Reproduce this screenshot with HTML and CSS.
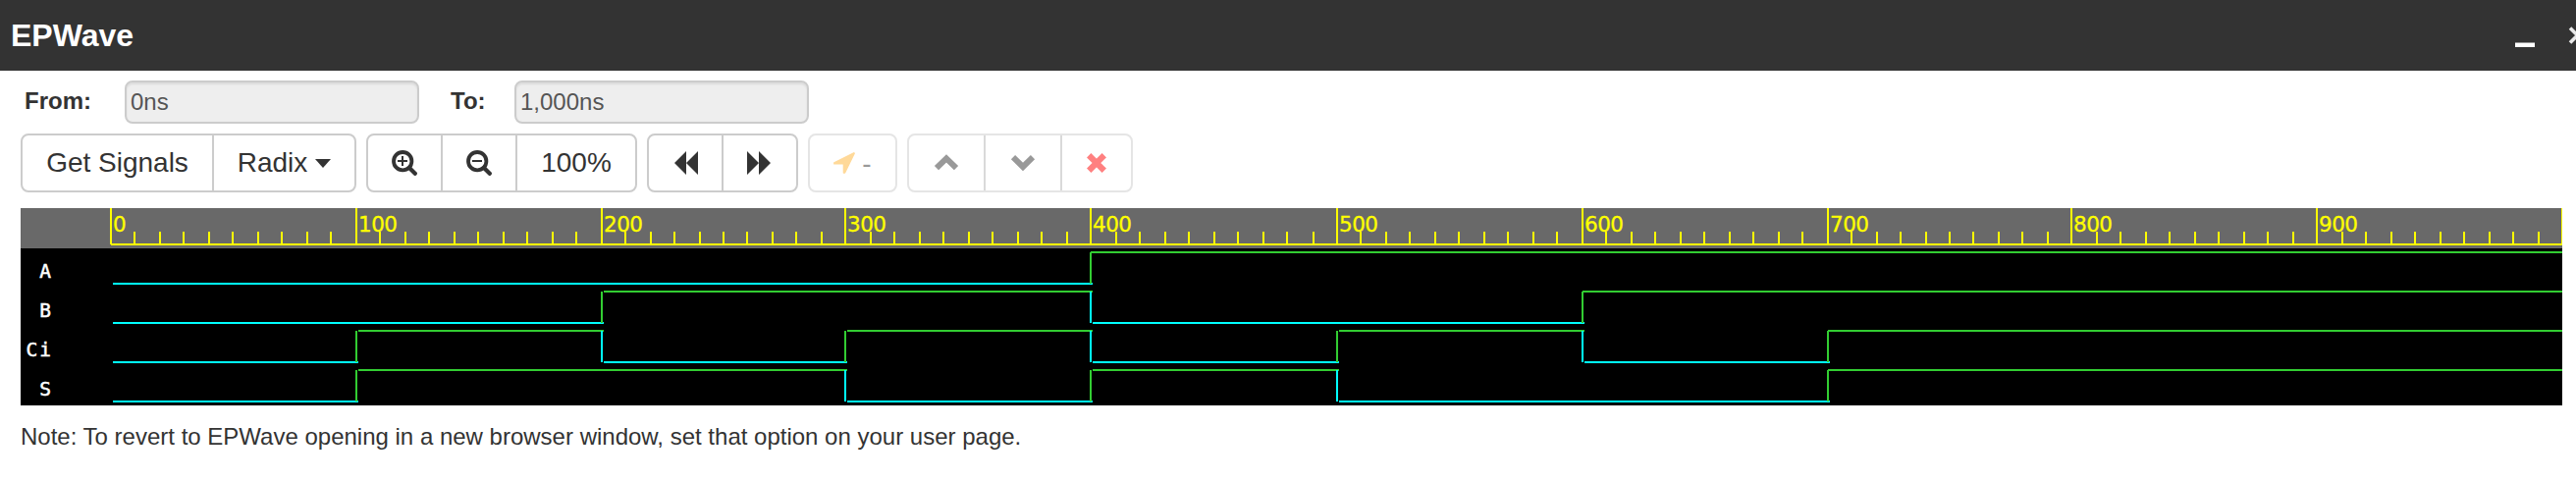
FILE: index.html
```html
<!DOCTYPE html>
<html lang="en">
<head>
<meta charset="utf-8">
<title>EPWave</title>
<link rel="stylesheet" href="styles.css">
</head>
<body>
<header class="titlebar">
  <h1 class="title">EPWave</h1>
  <svg class="window-controls" width="62" height="72" viewBox="0 0 62 72">
    <rect x="0" y="43.5" width="20" height="4.5" fill="#fff"/>
    <path d="M56 28.5L71 43.5M56 43.5L71 28.5" stroke="#e8e8e8" stroke-width="3.6"/>
  </svg>
</header>
<main class="content">
  <form class="range">
    <label class="range-label from" for="from">From:</label>
    <input class="range-input" id="from" value="0ns" disabled>
    <label class="range-label to" for="to">To:</label>
    <input class="range-input" id="to" value="1,000ns" disabled>
  </form>
  <div class="toolbar">
    <div class="group">
      <button class="btn signals">Get Signals</button>
      <button class="btn radix">Radix<svg class="caret" width="16" height="9" viewBox="0 0 16 9"><path d="M0 0H16L8 9Z" fill="#333"/></svg></button>
    </div>
    <div class="group">
      <button class="btn zoom-in" aria-label="Zoom in"><svg width="26" height="26" viewBox="0 0 26 26" fill="none" stroke="#333"><circle cx="11.2" cy="11.2" r="9.2" stroke-width="3.8"/><path d="M18 18L23.8 23.8" stroke-width="4.2" stroke-linecap="round"/><path d="M6 11H16M11 6V16" stroke-width="2"/></svg></button>
      <button class="btn zoom-out" aria-label="Zoom out"><svg width="26" height="26" viewBox="0 0 26 26" fill="none" stroke="#333"><circle cx="11.2" cy="11.2" r="9.2" stroke-width="3.8"/><path d="M18 18L23.8 23.8" stroke-width="4.2" stroke-linecap="round"/><path d="M6 11H16" stroke-width="2"/></svg></button>
      <button class="btn full">100%</button>
    </div>
    <div class="group">
      <button class="btn back" aria-label="Back"><svg width="28" height="24" viewBox="0 0 28 24"><path d="M3 12L15 0V24ZM15 12L27 0V24Z" fill="#333"/></svg></button>
      <button class="btn forward" aria-label="Forward"><svg width="28" height="24" viewBox="0 0 28 24"><path d="M1 0L13 12L1 24ZM13 0L25 12L13 24Z" fill="#333"/></svg></button>
    </div>
    <div class="group disabled">
      <button class="btn cursor" disabled><svg width="22" height="22" viewBox="0 0 22 22"><path d="M.8 10.8L20.8 .8L21.2 1.2L11.6 21L10.4 21V11.9H.8Z" fill="#ffd999" stroke="#ffd999" stroke-width="1.4" stroke-linejoin="round"/></svg><span class="dash">-</span></button>
    </div>
    <div class="group disabled">
      <button class="btn up" disabled aria-label="Move up"><svg width="26" height="18" viewBox="0 0 26 18"><path d="M3 14.2L13 4.4L23 14.2" fill="none" stroke="#999" stroke-width="6"/></svg></button>
      <button class="btn down" disabled aria-label="Move down"><svg width="26" height="18" viewBox="0 0 26 18"><path d="M3 3.2L13 13L23 3.2" fill="none" stroke="#999" stroke-width="6"/></svg></button>
      <button class="btn remove" disabled aria-label="Remove"><svg width="20" height="20" viewBox="0 0 20 20"><path d="M4.4 4.4L15.6 15.6M15.6 4.4L4.4 15.6" stroke="#ff8080" stroke-width="6.2" stroke-linecap="square" stroke-linejoin="round"/></svg></button>
    </div>
  </div>
  <svg class="wave" id="wave" width="2589" height="201" viewBox="0 0 2589 201"></svg>
  <p class="note">Note: To revert to EPWave opening in a new browser window, set that option on your user page.</p>
</main>
<script src="wave.js"></script>
</body>
</html>
```
FILE: styles.css
```css
* { box-sizing: border-box; }
body {
  margin: 0;
  height: 490px;
  overflow: hidden;
  background: #fff;
  color: #333;
  font-family: "Liberation Sans", Arial, sans-serif;
  font-size: 24px;
}
svg { display: block; flex: none; }
.titlebar {
  display: flex;
  justify-content: space-between;
  align-items: center;
  height: 72px;
  padding-left: 11px;
  background: #333;
}
.title { margin: 0; color: #fff; font-size: 32px; line-height: 36px; }
.content { padding: 10px 14px 0 21px; }
.range { display: flex; height: 44px; }
.range-label { font-weight: bold; line-height: 42px; }
.from { width: 106px; padding-left: 4px; }
.to { width: 97px; padding-left: 32px; }
.range-input {
  width: 300px;
  height: 44px;
  padding: 0 4px 1px;
  border: 2px solid #ccc;
  border-radius: 8px;
  background: #eee;
  box-shadow: inset 0 2px 2px rgba(0, 0, 0, .075);
  color: #555;
  font: inherit;
}
.toolbar { display: flex; gap: 10px; margin-top: 10px; }
.group { display: flex; height: 60px; border: 2px solid #ccc; border-radius: 8px; }
.btn {
  display: flex;
  justify-content: center;
  align-items: center;
  padding: 0;
  border: 0;
  background: none;
  color: #333;
  font: 28px "Liberation Sans", Arial, sans-serif;
}
.btn + .btn { border-left: 2px solid #ccc; }
.disabled { border-color: #e5e5e5; }
.disabled .btn { color: #999; }
.disabled .btn + .btn { border-color: #d9d9d9; }
.signals { width: 193px; }
.radix { width: 145px; gap: 8px; }
.zoom-in { width: 74px; }
.zoom-out { width: 76px; }
.full { width: 122px; }
.back { width: 74px; }
.forward { width: 76px; }
.cursor { width: 87px; gap: 7px; }
.dash { padding-top: 1px; }
.up { width: 76px; }
.down { width: 78px; }
.remove { width: 72px; }
.wave { margin-top: 16px; background: #000; }
.tick-label { fill: #ff0; stroke: #ff0; stroke-width: .3px; font: 21.5px "DejaVu Sans", sans-serif; letter-spacing: -.5px; }
.signal-label { fill: #fff; stroke: #fff; stroke-width: .5px; font: 19.5px "DejaVu Sans Mono", monospace; letter-spacing: 2px; text-anchor: end; }
.note { margin: 17px 0 0; line-height: 30px; }
```
FILE: wave.js
```js
const NS = 'http://www.w3.org/2000/svg';
const wave = document.getElementById('wave');
const WIDTH = 2589;

function add(tag, attrs, text) {
  const el = document.createElementNS(NS, tag);
  for (const key in attrs) el.setAttribute(key, attrs[key]);
  if (text !== undefined) el.textContent = text;
  wave.appendChild(el);
}
function bar(x, y, width, height, fill) {
  add('rect', { x, y, width, height, fill });
}
// Tick k stands for a time of 10k ns.
function tickX(k) {
  return 92 + 2 * Math.round(12.48 * k) + (k >= 49 ? 1 : 0);
}

bar(0, 0, WIDTH, 41, '#696969');
bar(92, 36, WIDTH - 92, 2, '#ff0');
for (let k = 0; k <= 100; k++) {
  const major = k % 10 === 0;
  bar(tickX(k) - 1, major ? 0 : 24, 2, major ? 37 : 13, '#ff0');
  if (major && k < 100) add('text', { x: tickX(k) + 2, y: 24, class: 'tick-label' }, k * 10);
}

const signals = [
  { name: 'A', edges: [0, 40] },
  { name: 'B', edges: [0, 20, 40, 60] },
  { name: 'Ci', edges: [0, 10, 20, 30, 40, 50, 60, 70] },
  { name: 'S', edges: [0, 10, 30, 40, 50, 70] }
];
signals.forEach(({ name, edges }, row) => {
  const top = 41 + row * 40;
  add('text', { x: 33, y: top + 30, class: 'signal-label' }, name);
  edges.forEach((edge, i) => {
    const high = i % 2 === 1;
    const color = high ? '#32cd32' : '#0ff';
    const last = i === edges.length - 1;
    const start = tickX(edge) + (last ? 0 : 2);
    const end = last ? WIDTH : tickX(edges[i + 1]) + 2;
    bar(start, top + (high ? 3 : 35), end - start, 2, color);
    if (i > 0) bar(tickX(edge) - 1, top + 4, 2, 32, color);
  });
});
```
